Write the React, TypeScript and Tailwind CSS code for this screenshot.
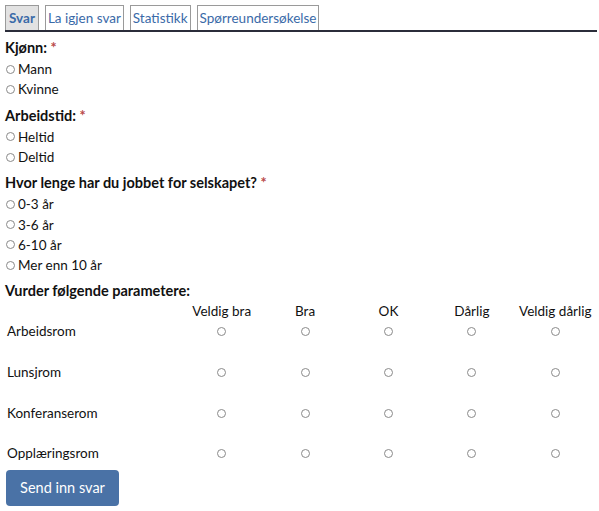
import React from "react";

const tabs = ["Svar", "La igjen svar", "Statistikk", "Spørreundersøkelse"];
const scale = ["Veldig bra", "Bra", "OK", "Dårlig", "Veldig dårlig"];
const rooms = ["Arbeidsrom", "Lunsjrom", "Konferanserom", "Opplæringsrom"];

function Dot() {
  return <span className="inline-block h-[9px] w-[9px] shrink-0 rounded-full border border-[#8a8a8a] bg-white" />;
}

function Question({ label, options }: { label: string; options: string[] }) {
  return (
    <div className="mb-[5px]">
      <div className="h-[22px] font-bold text-[14.5px] leading-[22px]">
        {label} <span className="text-[#b94a48]">*</span>
      </div>
      {options.map((o) => (
        <label key={o} className="ml-[1px] flex h-[20.3px] items-center gap-[3px] text-[13.5px]">
          <Dot />
          {o}
        </label>
      ))}
    </div>
  );
}

export default function App() {
  return (
    <div
      className="min-h-[511px] bg-white pl-[5px] pr-[2px] pt-[5px] text-[#111]"
      style={{ fontFamily: 'Lato, "Noto Sans", sans-serif' }}
    >
      {/* faner */}
      <div className="flex items-end gap-[6px] border-b-2 border-[#2b2d3a]">
        {tabs.map((t, i) => (
          <div
            key={t}
            className={
              "h-[25px] border border-b-0 border-[#9a9a9a] text-[13.5px] leading-[24px] text-[#3a6aa8] " +
              (i === 0 ? "bg-[#e2e2e2] px-[3px] font-bold" : "bg-white px-[2px]")
            }
          >
            {t}
          </div>
        ))}
      </div>

      <div className="mt-[5px]">
        <Question label="Kjønn:" options={["Mann", "Kvinne"]} />
        <Question label="Arbeidstid:" options={["Heltid", "Deltid"]} />
        <Question
          label="Hvor lenge har du jobbet for selskapet?"
          options={["0-3 år", "3-6 år", "6-10 år", "Mer enn 10 år"]}
        />

        <div className="h-[21px] font-bold text-[14.5px] leading-[21px]">Vurder følgende parametere:</div>

        <div className="grid grid-cols-[175px_repeat(5,1fr)] text-[13.5px]">
          <div className="h-[20px]" />
          {scale.map((s) => (
            <div key={s} className="h-[20px] text-center leading-[20px]">
              {s}
            </div>
          ))}
          {rooms.map((r, i) => (
            <React.Fragment key={r}>
              <div className={(i === 3 ? "h-[27px]" : "h-[40.6px]") + " pl-[2px] leading-[20px]"}>{r}</div>
              {scale.map((s) => (
                <div
                  key={s}
                  className={(i === 3 ? "h-[27px]" : "h-[40.6px]") + " flex justify-center pt-[6px]"}
                >
                  <Dot />
                </div>
              ))}
            </React.Fragment>
          ))}
        </div>

        <button className="ml-[1px] h-[36px] w-[113px] rounded-[4px] bg-[#4a72a6] text-[14.5px] text-white">
          Send inn svar
        </button>
      </div>
    </div>
  );
}
